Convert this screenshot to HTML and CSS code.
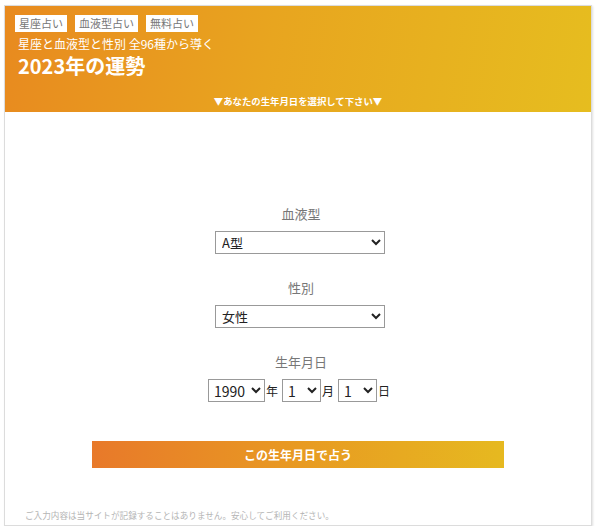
FILE: index.html
```html
<!DOCTYPE html>
<html lang="ja">
<head>
    <meta charset="UTF-8">
    <title>2023年の運勢</title>
    <link rel="stylesheet" href="styles.css">
</head>
<body>

    <div class="frame">
        <div class="header">
            <div class="tags">
                <span class="tag">星座占い</span>
                <span class="tag">血液型占い</span>
                <span class="tag">無料占い</span>
            </div>
            <p class="sub">星座と血液型と性別 全96種から導く</p>
            <h1>2023年の運勢</h1>
            <p class="guide">▼あなたの生年月日を選択して下さい▼</p>
        </div>

        <div class="form">
            <label for="blood">血液型</label>
            <select id="blood" class="wide">
                <option>A型</option>
                <option>B型</option>
                <option>O型</option>
                <option>AB型</option>
            </select>

            <label for="sex">性別</label>
            <select id="sex" class="wide">
                <option>女性</option>
                <option>男性</option>
            </select>

            <label>生年月日</label>
            <div class="date">
                <select class="year"><option>1990</option></select><span>年</span>
                <select class="md"><option>1</option></select><span>月</span>
                <select class="md"><option>1</option></select><span>日</span>
            </div>

            <button class="submit">この生年月日で占う</button>
        </div>

        <p class="note">ご入力内容は当サイトが記録することはありません。安心してご利用ください。</p>
    </div>

</body>
</html>
```

FILE: styles.css
```css
body {
    margin: 0;
    background-color: #ffffff;
    font-family: "Noto Sans CJK JP", "Noto Sans", sans-serif;
}

.frame {
    width: 586px;
    height: 519px;
    margin: 5px 0 0 4px;
    border: 1px solid #dcdcdc;
    box-shadow: 1px 1px 2px rgba(0, 0, 0, 0.12);
    display: flex;
    flex-direction: column;
}

.header {
    height: 106px;
    box-sizing: border-box;
    padding: 9px 0 0 10px;
    background: linear-gradient(100deg, #e88a1f 0%, #e8a51f 45%, #e6bd1f 100%);
    color: #ffffff;
    display: flex;
    flex-direction: column;
}

.tags {
    display: flex;
    gap: 8px;
}

.tag {
    background-color: #ffffff;
    color: #777777;
    font-size: 11px;
    line-height: 17px;
    padding: 0 4px;
}

.sub {
    margin: 4px 0 0 3px;
    font-size: 12px;
    line-height: 16px;
}

h1 {
    margin: 0 0 0 3px;
    font-size: 20px;
    line-height: 28px;
    font-weight: bold;
}

.guide {
    margin: auto 0 5px -10px;
    text-align: center;
    font-size: 9.4px;
    line-height: 12px;
    font-weight: bold;
}

.form {
    display: flex;
    flex-direction: column;
    align-items: center;
    padding-top: 93px;
}

label {
    font-size: 13px;
    line-height: 18px;
    color: #777777;
    margin-bottom: 8px;
    margin-left: 6px;
}

select {
    font-family: "Noto Sans CJK JP", "Noto Sans", sans-serif;
    font-size: 13px;
    color: #222222;
    background-color: #ffffff;
    border: 1px solid #999999;
    border-radius: 0;
    height: 23px;
    padding: 0 0 0 2px;
}

.wide {
    width: 170px;
    margin-left: 4px;
    margin-bottom: 25px;
}

.date {
    display: flex;
    align-items: center;
    font-size: 12px;
    color: #222222;
    margin-left: 6px;
}

.date select {
    font-size: 14px;
    padding: 0 0 0 1px;
}

.date span {
    margin: 0 4px 0 1px;
}

.year {
    width: 57px;
}

.md {
    width: 39px;
}

.submit {
    margin-top: 39px;
    width: 412px;
    height: 27px;
    border: none;
    background: linear-gradient(90deg, #e8792a 0%, #e89a22 50%, #e6b920 100%);
    color: #ffffff;
    font-family: "Noto Sans CJK JP", "Noto Sans", sans-serif;
    font-size: 12px;
    font-weight: bold;
    cursor: pointer;
}

.note {
    margin: auto 0 4px 20px;
    font-size: 8.6px;
    color: #b5b5b5;
}
```
